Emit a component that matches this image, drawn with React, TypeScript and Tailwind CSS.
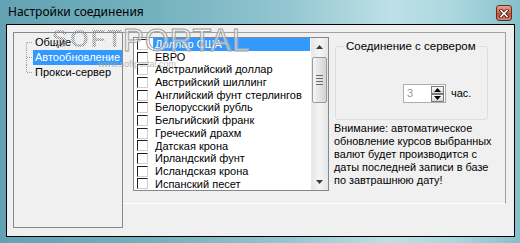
import React from "react";

const items = [
  "Доллар США",
  "ЕВРО",
  "Австралийский доллар",
  "Австрийский шиллинг",
  "Английский фунт стерлингов",
  "Белорусский рубль",
  "Бельгийский франк",
  "Греческий драхм",
  "Датская крона",
  "Ирландский фунт",
  "Исландская крона",
  "Испанский песет",
];

function TreeLines({ kind }: { kind: "first" | "mid" | "last" }) {
  return (
    <svg width="19" height="15" className="shrink-0">
      <line
        x1="12.5"
        x2="12.5"
        y1={kind === "first" ? 7.5 : 0}
        y2={kind === "last" ? 7.5 : 15}
        stroke="#a0a0a0"
        strokeDasharray="1 1"
      />
      <line x1="13" x2="19" y1="7.5" y2="7.5" stroke="#a0a0a0" strokeDasharray="1 1" />
    </svg>
  );
}

function Arrow({ up }: { up: boolean }) {
  return (
    <svg width="7" height="4" viewBox="0 0 7 4">
      <path d={up ? "M0 4 L3.5 0 L7 4 Z" : "M0 0 L3.5 4 L7 0 Z"} fill="#3c3c3c" />
    </svg>
  );
}

function SpinBtn({ up }: { up: boolean }) {
  return (
    <div className="w-[13px] h-[8px] flex items-center justify-center border border-[#7a7a7a] bg-[linear-gradient(#fafafa,#d6d6d6)]">
      <svg width="7" height="4" viewBox="0 0 7 4">
        <path d={up ? "M0 4 L3.5 0 L7 4 Z" : "M0 0 L3.5 4 L7 0 Z"} fill="#000" />
      </svg>
    </div>
  );
}

export default function App() {
  return (
    <div className="relative w-[520px] h-[243px] overflow-hidden flex flex-col bg-[linear-gradient(90deg,#62a2b2_0%,#74b1bf_30%,#93c6d0_55%,#bde0e6_75%,#a9d6de_88%,#86c0cb_100%)] font-['Liberation_Sans',Arial,sans-serif] text-black">
      {/* title bar */}
      <div className="h-[24px] shrink-0 flex items-center pl-[8px] pr-[8px]">
        <span className="text-[12px] leading-[14px] font-['Noto_Sans',sans-serif] text-black">
          Настройки соединения
        </span>
        <div className="ml-auto mt-[2px] w-[16px] h-[16px] rounded-[3px] border border-[#6b2b22] bg-[linear-gradient(#e9a08b_0%,#d16a52_45%,#bf4a33_55%,#d8806a_100%)] flex items-center justify-center">
          <svg width="10" height="9" viewBox="0 0 10 9">
            <path d="M2 1.5 L8 7.5 M8 1.5 L2 7.5" stroke="#3a1a14" strokeWidth="3.2" strokeLinecap="square" />
            <path d="M2 1.5 L8 7.5 M8 1.5 L2 7.5" stroke="#ffffff" strokeWidth="1.6" strokeLinecap="square" />
          </svg>
        </div>
      </div>

      {/* client frame */}
      <div className="flex-1 ml-[6px] mr-[5px] mb-[6px] border border-black bg-[#f0f0f0] pl-[6px] pt-[7px]">
        <div className="flex">
          {/* tree view */}
          <div className="w-[110px] h-[196px] shrink-0 border border-[#828790] bg-[#f0f0f0] pt-[2px] text-[11px] leading-[15px]">
            <div className="flex h-[15px] items-center">
              <TreeLines kind="first" />
              <span className="px-[2px]">Общие</span>
            </div>
            <div className="flex h-[15px] items-center">
              <TreeLines kind="mid" />
              <span className="px-[2px] h-[15px] flex-1 bg-[#3399ff] text-white whitespace-nowrap">Автообновление</span>
            </div>
            <div className="flex h-[15px] items-center">
              <TreeLines kind="last" />
              <span className="px-[2px]">Прокси-сервер</span>
            </div>
          </div>

          {/* right panel */}
          <div className="w-[383px] h-[172px] shrink-0 border-t border-r border-b border-t-[#a0a0a0] border-r-[#a0a0a0] border-b-white pl-[10px] pt-[4px] flex">
            {/* list box */}
            <div className="w-[196px] h-[154px] shrink-0 border border-[#828790] bg-white flex">
              <div className="flex-1 overflow-hidden pl-[3px] text-[11px]">
                {items.map((it, i) => (
                  <div key={it} className="flex items-center h-[12.7px]">
                    <div className="w-[11px] h-[11px] shrink-0 border border-t-[#1e1e1e] border-l-[#1e1e1e] border-r-[#cfcfcf] border-b-[#cfcfcf] bg-white" />
                    <div
                      className={
                        "ml-[5px] mr-[1px] flex-1 h-[12.7px] leading-[12.7px] px-[2px] whitespace-nowrap " +
                        (i === 0 ? "bg-[#3399ff] text-white" : "")
                      }
                    >
                      {it}
                    </div>
                  </div>
                ))}
              </div>
              {/* scrollbar */}
              <div className="w-[17px] shrink-0 flex flex-col bg-[linear-gradient(90deg,#e6e6e6,#f4f4f4_50%,#e6e6e6)]">
                <div className="h-[17px] flex items-center justify-center">
                  <Arrow up />
                </div>
                <div className="mx-[1px] mt-[2px] h-[46px] rounded-[2px] border border-[#9a9a9a] bg-[linear-gradient(90deg,#f6f6f6,#e4e4e4_50%,#d4d4d4)] flex flex-col items-center justify-center gap-[2px]">
                  <div className="w-[7px] h-[1px] bg-[#6a6a6a]" />
                  <div className="w-[7px] h-[1px] bg-[#6a6a6a]" />
                  <div className="w-[7px] h-[1px] bg-[#6a6a6a]" />
                  <div className="w-[7px] h-[1px] bg-[#6a6a6a]" />
                </div>
                <div className="flex-1" />
                <div className="h-[17px] flex items-center justify-center">
                  <Arrow up={false} />
                </div>
              </div>
            </div>

            {/* right column */}
            <div className="ml-[5px] flex flex-col">
              <div className="relative ml-[1px] mt-[9px] w-[153px] h-[74px] rounded-[3px] border border-[#d5dfe5] pl-[67px] pt-[37px]">
                <span className="absolute left-[8px] top-[-7px] px-[2px] bg-[#f0f0f0] text-[11.5px] leading-[13px] whitespace-nowrap">
                  Соединение с сервером
                </span>
                <div className="flex items-center">
                  <div className="w-[43px] h-[19px] border border-[#abadb3] bg-white flex items-center">
                    <span className="pl-[3px] flex-1 text-[11px] text-[#9a9a9a]">3</span>
                    <div className="flex flex-col mr-[1px]">
                      <SpinBtn up />
                      <SpinBtn up={false} />
                    </div>
                  </div>
                  <span className="ml-[5px] text-[11px]">час.</span>
                </div>
              </div>
              <div className="mt-[2px] text-[10.9px] leading-[13px] whitespace-nowrap">
                Внимание: автоматическое
                <br />
                обновление курсов выбранных
                <br />
                валют будет производится с
                <br />
                даты последней записи в базе
                <br />
                по завтрашнюю дату!
              </div>
            </div>
          </div>
        </div>
      </div>

      {/* watermark overlay */}
      <div className="pointer-events-none absolute left-[52px] top-[27px] text-[24px] leading-[24px] font-bold tracking-[2px] text-transparent bg-clip-text bg-[repeating-conic-gradient(#8f8f8f_0_25%,transparent_0_50%)] bg-[length:2px_2px]">
        SOFT
      </div>
      <div className="pointer-events-none absolute left-[123px] top-[25px] text-[31px] leading-[31px] tracking-[1px] text-white/50 [-webkit-text-stroke:1px_#a0a0a0]">
        PORTAL
      </div>
      <div className="pointer-events-none absolute left-[98px] top-[59px] text-[9px] leading-[10px] text-[#a8a8a8]/80">
        www.softportal.com
      </div>
    </div>
  );
}
